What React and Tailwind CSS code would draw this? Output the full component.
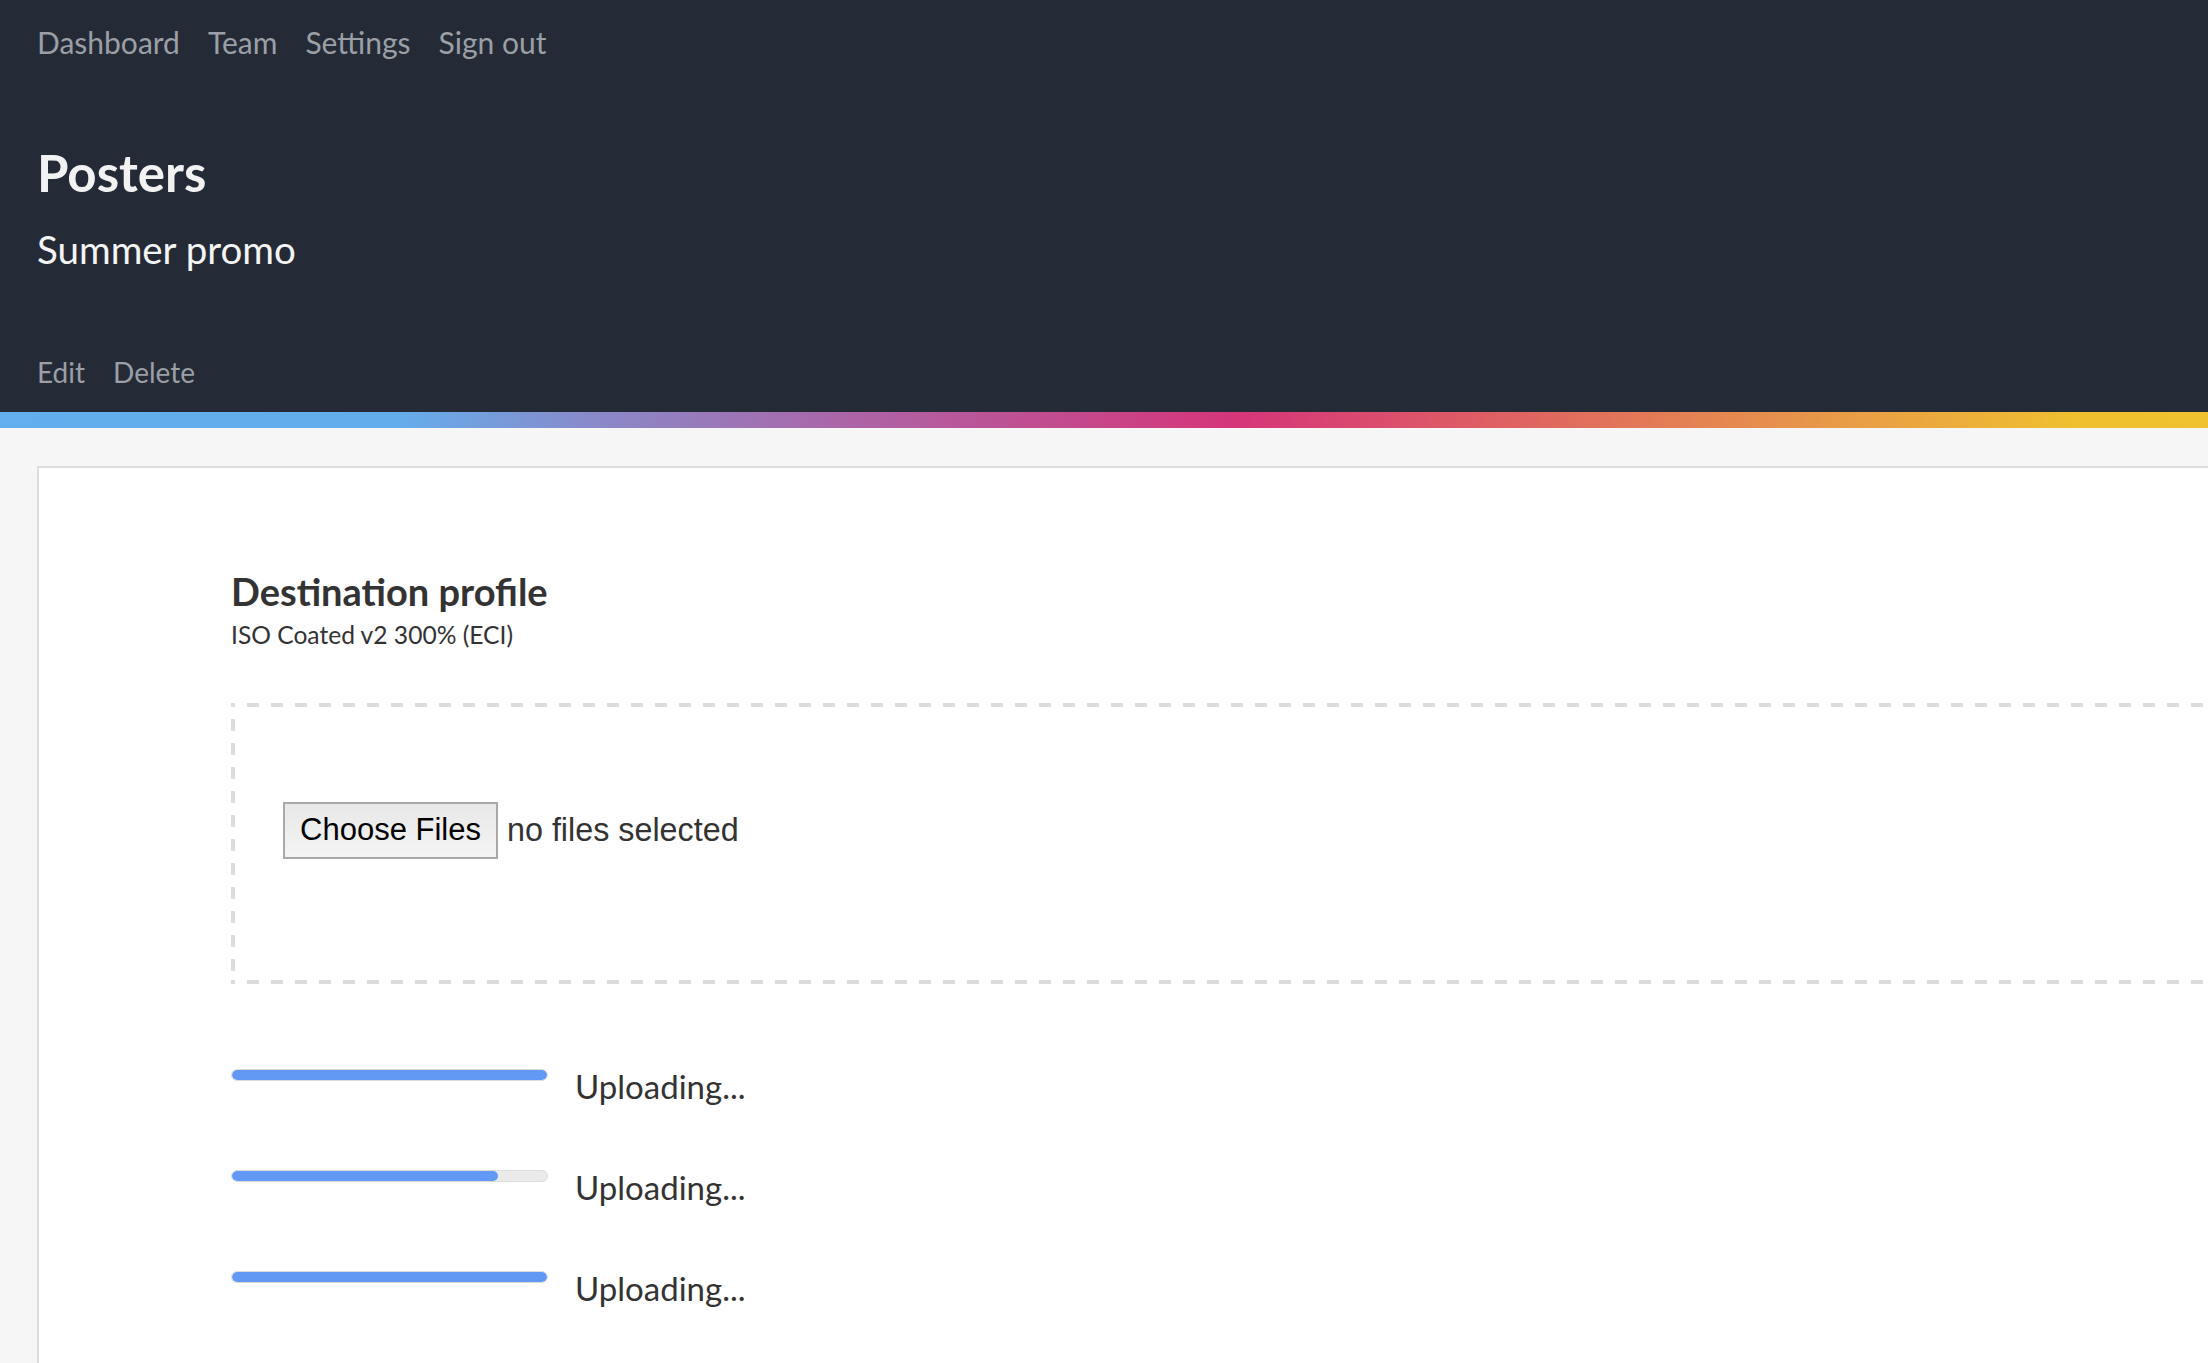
import React from "react";

const q = { fontFamily: "Lato, 'Open Sans', sans-serif" };

function Bar({ pct }) {
  return (
    <div className="w-[317px] h-[12px] mt-[3px] rounded-full bg-[#ebebeb] border border-[#dcdcdc] overflow-hidden shrink-0">
      <div className="h-full rounded-full bg-[#6199f4]" style={{ width: `${pct}%` }} />
    </div>
  );
}

export default function App() {
  const rows = [100, 84.5, 100];
  return (
    <div className="min-h-[1363px] bg-[#f6f6f6] overflow-hidden" style={q}>
      <header className="bg-[#252b36] px-[37px] pt-[25px] pb-[23px]">
        <nav className="flex gap-[28px] text-[30px] leading-[34px] text-[#9b9fa6]">
          <span>Dashboard</span>
          <span>Team</span>
          <span>Settings</span>
          <span>Sign out</span>
        </nav>
        <h1 className="mt-[86px] text-[51px] leading-[56px] font-bold text-[#f2f2f2]">Posters</h1>
        <h2 className="mt-[26px] text-[38.5px] leading-[44px] text-[#f4f4f4]">Summer promo</h2>
        <div className="mt-[84px] flex gap-[28px] text-[28px] leading-[34px] text-[#9b9fa6]">
          <span>Edit</span>
          <span>Delete</span>
        </div>
      </header>
      <div className="h-[16px] bg-[linear-gradient(90deg,#63aeee_0%,#64adec_18%,#8a89c9_27%,#ab66a8_38%,#d6357a_56%,#e0685f_70%,#e89a48_83%,#f0c02f_94%,#f0c22f_100%)]" />
      <div className="pt-[38px] pl-[37px]">
        <div className="w-[2260px] bg-white border-2 border-[#dddddd] pl-[192px] pt-[103px] pb-[80px]">
          <h3 className="text-[38px] leading-[40px] font-bold text-[#333333]">Destination profile</h3>
          <p className="mt-[9px] text-[24.6px] leading-[30px] text-[#333333]">ISO Coated v2 300% (ECI)</p>
          <div className="mt-[53px] pl-[52px] pt-[99px] pb-[125px] [background:repeating-linear-gradient(90deg,#dcdcdc_0_12px,transparent_12px_24px)_-8px_0/calc(100%+8px)_4px_no-repeat,repeating-linear-gradient(90deg,#dcdcdc_0_12px,transparent_12px_24px)_-8px_100%/calc(100%+8px)_4px_no-repeat,repeating-linear-gradient(180deg,#dcdcdc_0_12px,transparent_12px_24px)_0_-8px/4px_calc(100%+8px)_no-repeat]">
            <div className="flex items-center gap-[9px]" style={{ fontFamily: "'Liberation Sans', Arial, sans-serif" }}>
              <div className="w-[215px] h-[57px] border-2 border-[#a9a9a9] bg-[linear-gradient(180deg,#e8e8e8,#f4f4f4)] flex items-center justify-center text-[31px] text-black">
                Choose Files
              </div>
              <span className="text-[32.3px] text-[#333333]">no files selected</span>
            </div>
          </div>
          <div className="mt-[82px] flex flex-col gap-[61px]">
            {rows.map((p, i) => (
              <div key={i} className="flex items-start gap-[27px]">
                <Bar pct={p} />
                <span className="text-[33px] leading-[40px] text-[#333333]">Uploading...</span>
              </div>
            ))}
          </div>
        </div>
      </div>
    </div>
  );
}
